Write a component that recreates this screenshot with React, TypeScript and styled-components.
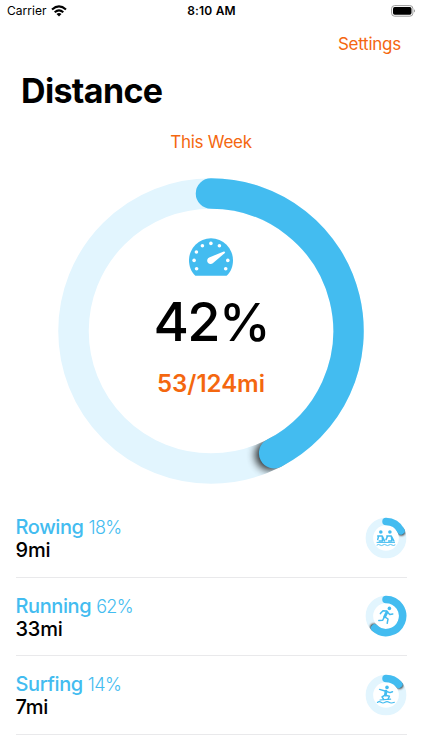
import React from "react";
import styled, { createGlobalStyle } from "styled-components";

const BLUE = "#43bcf0";
const PALE = "#e2f5fe";
const ORANGE = "#f4670f";

const GlobalStyle = createGlobalStyle`
  * { box-sizing: border-box; }
  body { margin: 0; background: #fff; font-family: Inter, "Liberation Sans", sans-serif; }
`;

const Screen = styled.main`
  width: 422px;
  height: 750px;
  overflow: hidden;
  display: flex;
  flex-direction: column;
  background: #fff;
  color: #000;
`;

const StatusBar = styled.header`
  height: 22px;
  display: grid;
  grid-template-columns: 1fr auto 1fr;
  align-items: center;
  padding: 0 6px 0 7px;
  font-size: 12px;
  line-height: 22px;
`;

const Carrier = styled.div`
  display: flex;
  align-items: center;
  gap: 4px;
  letter-spacing: 0.05px;
`;

const Clock = styled.div`
  font-weight: 600;
  letter-spacing: 0.2px;
`;

const BatterySlot = styled.div`
  display: flex;
  justify-content: flex-end;
`;

const NavBar = styled.nav`
  height: 44px;
  padding: 0 21px;
  display: flex;
  align-items: center;
  justify-content: flex-end;
`;

const LinkButton = styled.button`
  border: 0;
  padding: 0;
  background: none;
  font: 400 17px/22px Inter, sans-serif;
  letter-spacing: -0.25px;
  color: ${ORANGE};
`;

const Title = styled.h1`
  margin: 5px 0 0 21px;
  font-size: 34px;
  line-height: 40px;
  font-weight: 700;
  letter-spacing: -0.65px;
`;

const Period = styled.div`
  display: flex;
  justify-content: center;
  margin-top: 20px;
  height: 22px;
`;

const Gauge = styled.section`
  display: grid;
  place-items: center;
  margin-top: 18px;
  height: 320px;
  > * { grid-area: 1 / 1; }
`;

const GaugeText = styled.div`
  display: flex;
  flex-direction: column;
  align-items: center;
  height: 320px;
  padding-top: 67px;
`;

const Percent = styled.div`
  margin-top: 16px;
  font-size: 54px;
  line-height: 60px;
  font-weight: 450;
  letter-spacing: -1.6px;
`;

const PercentSign = styled.span`
  font-size: 52px;
  letter-spacing: -2px;
`;

const Progress = styled.div`
  margin-top: 16px;
  font-size: 24px;
  line-height: 30px;
  font-weight: 600;
  letter-spacing: 0;
  color: ${ORANGE};
`;

const List = styled.ul`
  list-style: none;
  margin: 8px 15px 0 16px;
  padding: 0;
`;

const Row = styled.li`
  height: 78.5px;
  display: flex;
  align-items: center;
  justify-content: space-between;
  border-bottom: 1px solid #e9e9eb;
`;

const Info = styled.div`
  display: flex;
  flex-direction: column;
  margin-left: -0.5px;
  padding-top: 3px;
`;

const Activity = styled.div`
  font-size: 20px;
  line-height: 23px;
  font-weight: 500;
  letter-spacing: -0.4px;
  color: ${BLUE};
`;

const Share = styled.span`
  font-size: 18px;
  font-weight: 300;
  letter-spacing: -0.65px;
`;

const Amount = styled.div`
  font-size: 20px;
  line-height: 23px;
  font-weight: 500;
  letter-spacing: -0.2px;
`;

type RingProps = {
  id: string;
  size: number;
  radius: number;
  stroke: number;
  value: number;
  blur: number;
  children?: React.ReactNode;
};

function Ring({ id, size, radius, stroke, value, blur, children }: RingProps) {
  const c = size / 2;
  const angle = value * Math.PI * 2;
  const x = c + radius * Math.sin(angle);
  const y = c - radius * Math.cos(angle);
  const arc = `M${c} ${c - radius}A${radius} ${radius} 0 ${value > 0.5 ? 1 : 0} 1 ${x} ${y}`;
  // The tip shadow falls ahead of the arc, along the track.
  const sx = x + Math.cos(angle) * blur;
  const sy = y + Math.sin(angle) * blur;
  return (
    <svg width={size} height={size} viewBox={`0 0 ${size} ${size}`}>
      <defs>
        <mask id={`${id}-track`} maskUnits="userSpaceOnUse" x="0" y="0" width={size} height={size}>
          <circle cx={c} cy={c} r={radius} fill="none" stroke="#fff" strokeWidth={stroke} />
        </mask>
        <filter id={`${id}-blur`} filterUnits="userSpaceOnUse" x="0" y="0" width={size} height={size}>
          <feGaussianBlur stdDeviation={blur} />
        </filter>
      </defs>
      <circle cx={c} cy={c} r={radius} fill="none" stroke={PALE} strokeWidth={stroke} />
      <g mask={`url(#${id}-track)`}>
        <circle cx={sx} cy={sy} r={stroke / 2} fill="#000" opacity="0.85" filter={`url(#${id}-blur)`} />
      </g>
      <path d={arc} fill="none" stroke={BLUE} strokeWidth={stroke} strokeLinecap="round" />
      {children}
    </svg>
  );
}

const Wifi = () => (
  <svg width="16" height="12" viewBox="0 0 16 12" fill="none" stroke="#000" strokeWidth="2.1">
    <path d="M1 4.5Q8 -1.8 15 4.5M3.7 7.2Q8 3.4 12.3 7.2" />
    <path d="M5.5 9Q8 7.1 10.5 9L8 11.6Z" fill="#000" stroke="none" />
  </svg>
);

const Battery = () => (
  <svg width="25" height="12" viewBox="0 0 25 12">
    <rect x="0.6" y="0.6" width="21.3" height="10.6" rx="3" fill="#fff" stroke="#9b9b9b" />
    <rect x="2" y="2" width="18.5" height="7.8" rx="1.7" />
    <path d="M23.1 4.2Q25 5.9 23.1 7.6Z" fill="#8b8b8b" />
  </svg>
);

const DIALS = [[7.6, 30.7], [5.1, 22.4], [7.4, 14], [13.4, 7.8], [21.9, 5.4], [30.4, 7.8], [38.8, 22.4], [36.7, 30.7]];

const Speedometer = () => (
  <svg width="44" height="38" viewBox="0 0 44 38">
    <path d="M6.4 37.8C2 34 0 28 0 22.3A22 22 0 0 1 44 22.3C44 28 42 34 37.6 37.8Z" fill={BLUE} />
    <g fill="#fff">
      {DIALS.map(([cx, cy]) => <circle key={`${cx}-${cy}`} cx={cx} cy={cy} r="1.8" />)}
      <path d="M20.2 19.5L34.8 13.4Q37.1 13.4 35.5 15.3L23.8 25.2A3.4 3.4 0 1 1 20.2 19.5Z" />
    </g>
  </svg>
);

const Rower = () => (
  <g stroke={BLUE} fill="none" strokeLinecap="round" strokeLinejoin="round">
    <circle cx="15.8" cy="15" r="1.8" fill={BLUE} stroke="none" />
    <circle cx="24.9" cy="15" r="1.8" fill={BLUE} stroke="none" />
    <path d="M12.7 19H17.2L17.6 24H14.2M21.8 19H26.3L26.9 24H23.6M17.5 19.6L19.6 24M26.6 19.6L28.9 24M13.5 19.5L12.7 22.6M22.4 19.5L21 22.6" strokeWidth="1.5" />
    <path d="M12 25.4H29.6" strokeWidth="1" />
    <path d="M12 28Q13.5 26.9 15 28T18 28T21 28T24 28T27 28T30 28" strokeWidth="0.9" />
  </g>
);

const Runner = () => (
  <g stroke={BLUE} fill="none" strokeLinecap="round" strokeLinejoin="round">
    <circle cx="24.4" cy="13.4" r="1.8" fill={BLUE} stroke="none" />
    <path d="M22 17L19.6 21.8" strokeWidth="2.8" />
    <path d="M21.6 16L18 15.7L15.4 18.6M22.8 17.4L24.8 19.6L27.8 18.9M19.8 21.8L23 24L22.2 28.3M19.2 22L17.7 25.2L13.8 25.5" strokeWidth="1.5" />
  </g>
);

const Surfer = () => (
  <g stroke={BLUE} fill="none" strokeLinecap="round" strokeLinejoin="round">
    <circle cx="22" cy="13.4" r="1.8" fill={BLUE} stroke="none" />
    <path d="M21 17.2L20.4 21" strokeWidth="2.8" />
    <path d="M14.6 15.4L20 17L25 18.6L27.5 17.7M20.2 21L17 22.8L18.7 25.4M20.5 21.3L24.4 22.2L23 25.2" strokeWidth="1.5" />
    <path d="M15 26L25.6 25.2" strokeWidth="1.2" />
    <path d="M12.4 28.5Q14 26.9 16 28.3T20 28.3T24 28.3T29.4 28.3" strokeWidth="1.1" />
  </g>
);

const activities = [
  { name: "Rowing", percent: 18, miles: 9, Glyph: Rower },
  { name: "Running", percent: 62, miles: 33, Glyph: Runner },
  { name: "Surfing", percent: 14, miles: 7, Glyph: Surfer },
];

export default function App() {
  return (
    <Screen>
      <GlobalStyle />
      <StatusBar>
        <Carrier>Carrier <Wifi /></Carrier>
        <Clock>8:10 AM</Clock>
        <BatterySlot><Battery /></BatterySlot>
      </StatusBar>
      <NavBar><LinkButton>Settings</LinkButton></NavBar>
      <Title>Distance</Title>
      <Period><LinkButton>This Week</LinkButton></Period>
      <Gauge>
        <Ring id="total" size={320} radius={137.5} stroke={30.5} value={0.424} blur={4} />
        <GaugeText>
          <Speedometer />
          <Percent>42<PercentSign>%</PercentSign></Percent>
          <Progress>53/124mi</Progress>
        </GaugeText>
      </Gauge>
      <List>
        {activities.map(({ name, percent, miles, Glyph }) => (
          <Row key={name}>
            <Info>
              <Activity>{name} <Share>{percent}%</Share></Activity>
              <Amount>{miles}mi</Amount>
            </Info>
            <Ring id={name} size={42} radius={16.6} stroke={7.5} value={percent / 100} blur={0.9}>
              <Glyph />
            </Ring>
          </Row>
        ))}
      </List>
    </Screen>
  );
}
